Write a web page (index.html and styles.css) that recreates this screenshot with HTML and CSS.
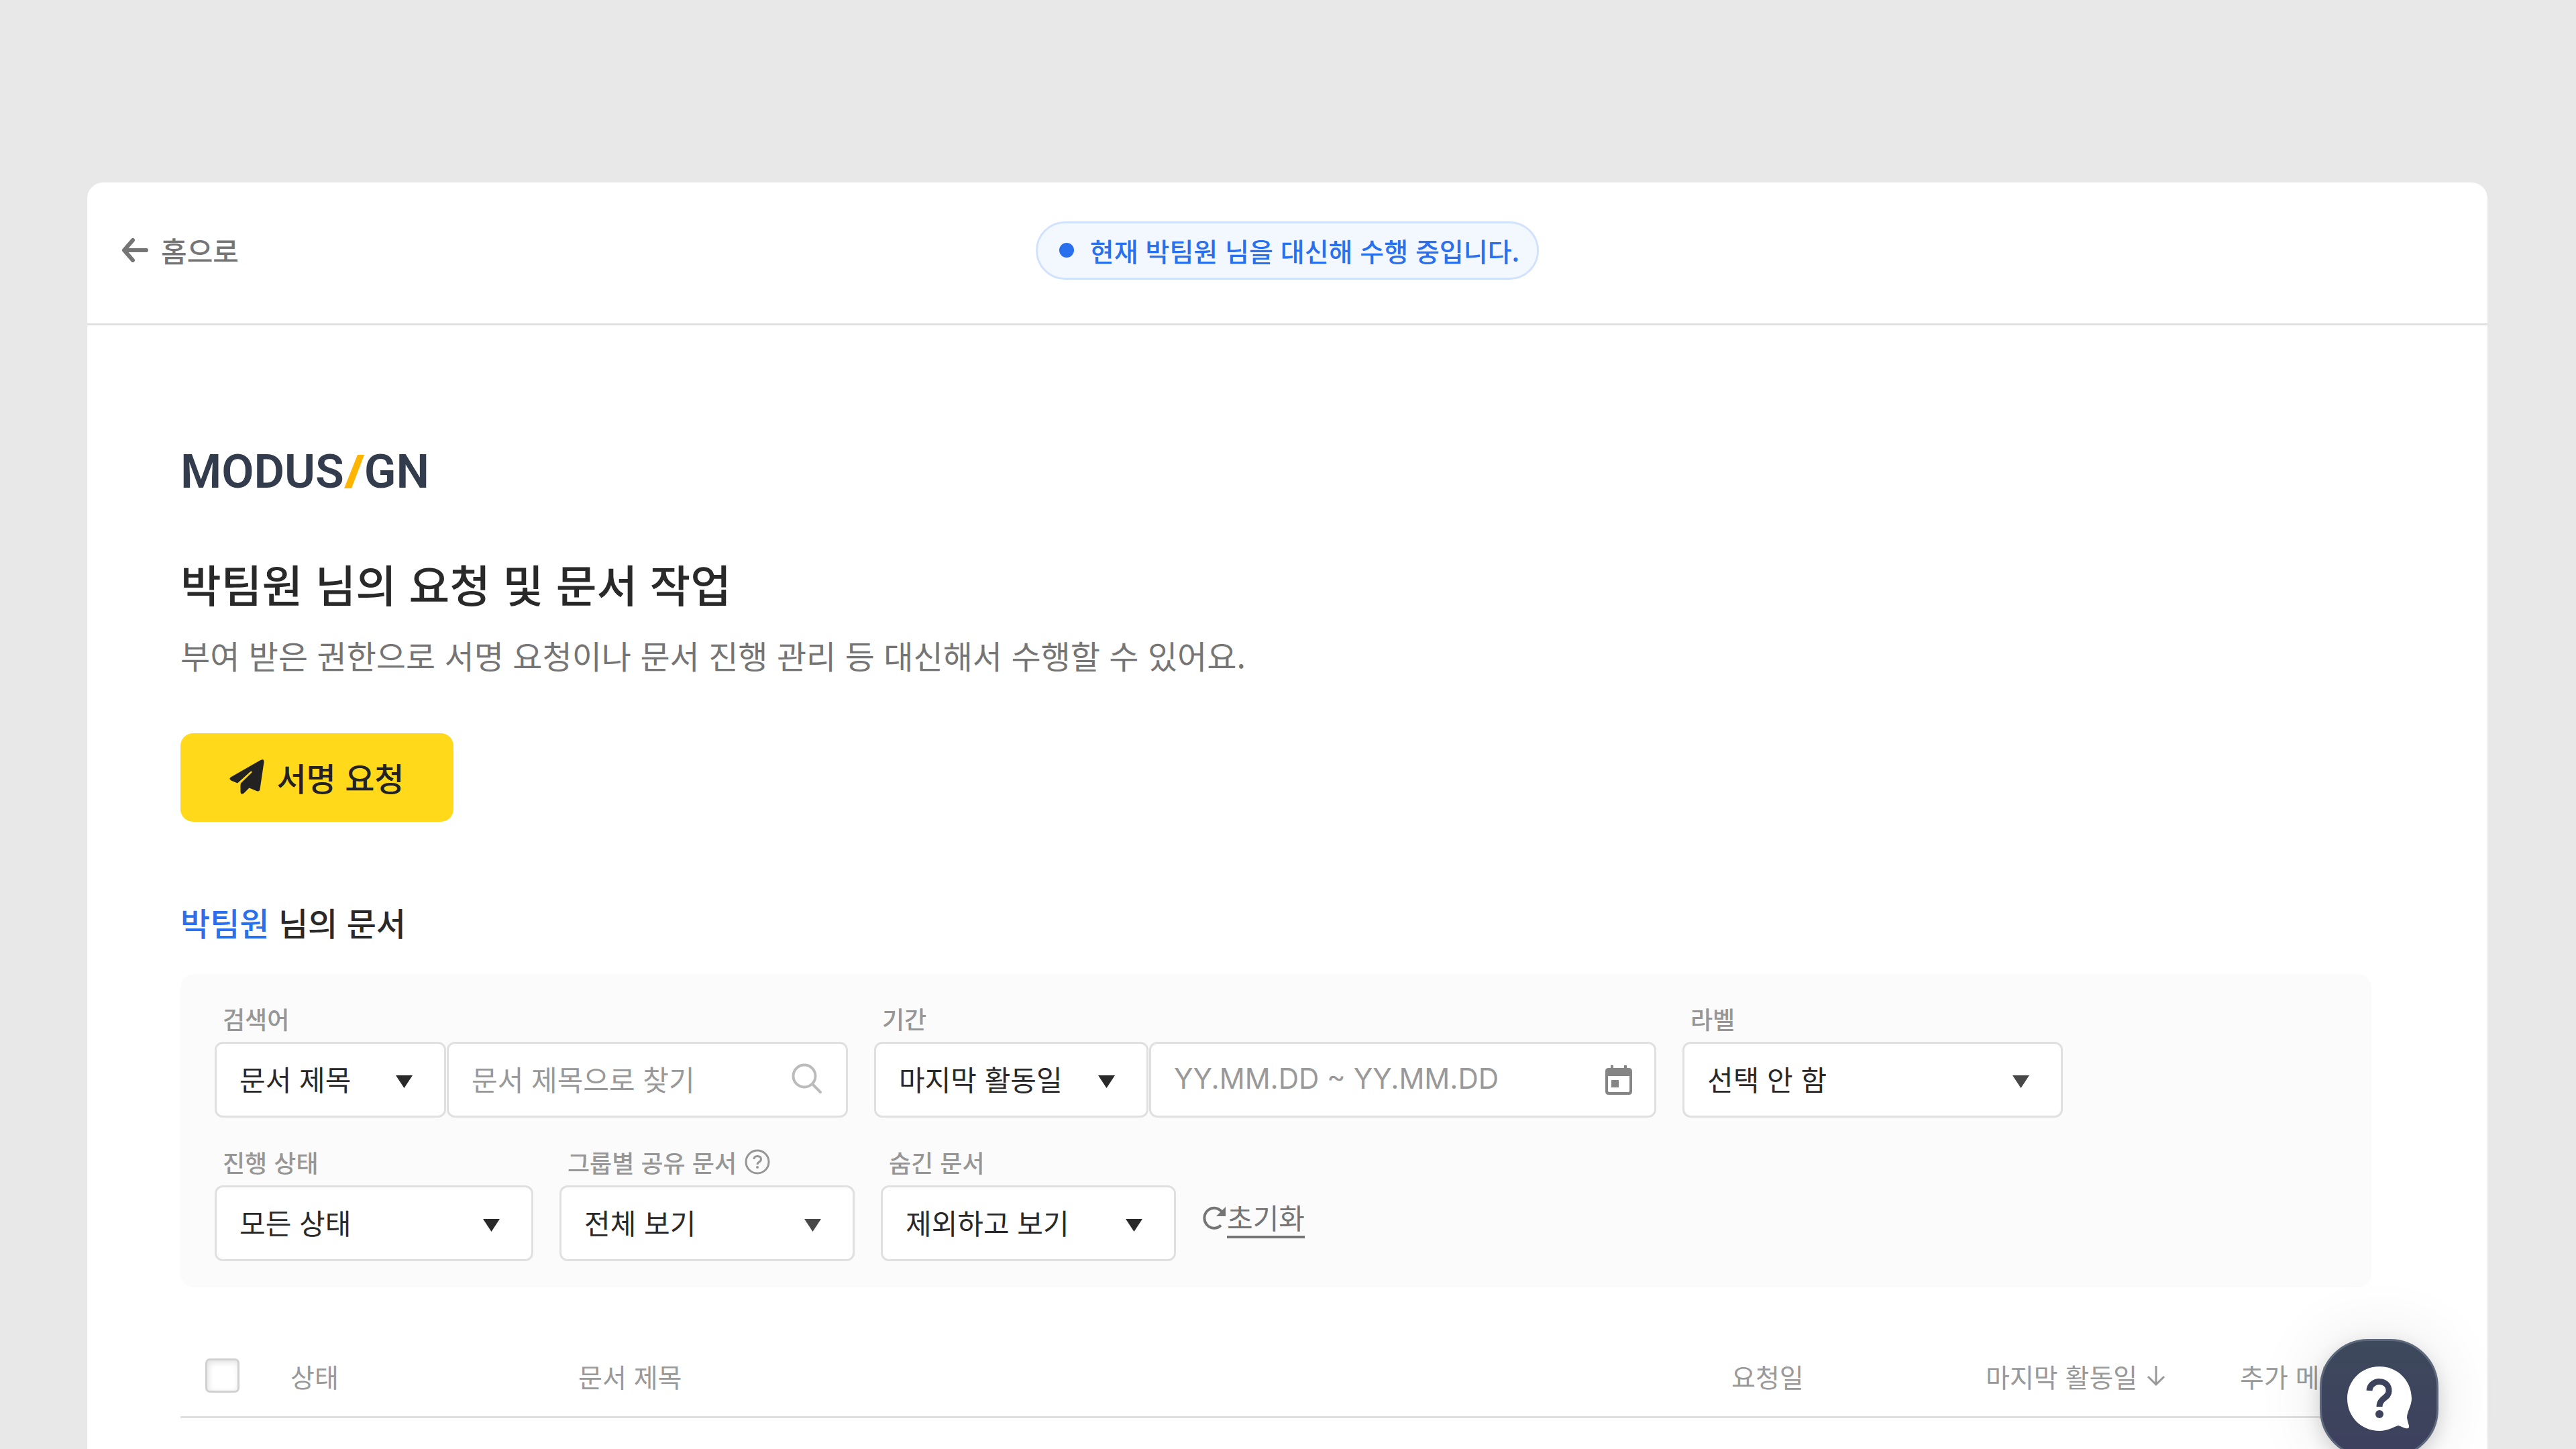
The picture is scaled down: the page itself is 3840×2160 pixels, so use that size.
FILE: index.html
```html
<!DOCTYPE html>
<html lang="ko">
<head>
    <meta charset="UTF-8">
    <meta name="viewport" content="width=device-width, initial-scale=1.0">
    <title>박팀원 님의 요청 및 문서 작업</title>
    <link rel="stylesheet" href="styles.css">
</head>
<body>
    <div class="page">
        <header class="topbar">
            <a class="home-link" href="#">
                <svg class="home-arrow" viewBox="0 0 40 36" aria-hidden="true">
                    <path d="M17 3 L4 18 L17 33 M5 18 H37" fill="none" stroke="currentColor" stroke-width="6" stroke-linecap="round" stroke-linejoin="round"/>
                </svg>
                홈으로
            </a>
            <div class="status-pill"><span class="status-dot"></span>현재 박팀원 님을 대신해 수행 중입니다.</div>
        </header>

        <main class="content">
            <div class="logo">
                <span>MODUS</span>
                <svg class="logo-slash" viewBox="0 0 30 50" aria-hidden="true"><path d="M20 0 H30 L11 50 H0 Z" fill="currentColor"/></svg>
                <span>GN</span>
            </div>
            <h1>박팀원 님의 요청 및 문서 작업</h1>
            <p class="description">부여 받은 권한으로 서명 요청이나 문서 진행 관리 등 대신해서 수행할 수 있어요.</p>
            <button class="request-button" type="button">
                <svg class="plane-icon" viewBox="0 0 52 52" aria-hidden="true">
                    <path d="M46.500 1 Q52 -1.500 51.500 4 L45.500 44.500 Q44.800 48.500 41 47.200 L29.500 42.500 L21.500 50.500 Q17 53.500 16.500 48.500 V38 Q16.500 36.500 17.500 35 L33.500 19.500 Q34 17 31.500 18 L12 35.500 L2.500 31.500 Q-1.500 29 2 26.500 Z" fill="currentColor"/>
                </svg>
                서명 요청
            </button>

            <h2><span class="member">박팀원</span> 님의 문서</h2>

            <form class="filters">
                <div class="filter-row">
                    <div class="filter">
                        <label for="keywordType">검색어</label>
                        <div class="controls">
                            <div class="select-box keyword-type">
                                <select id="keywordType"><option>문서 제목</option></select>
                                <svg class="caret" viewBox="0 0 25 19" aria-hidden="true"><path d="M0 0 H25 L12.500 19 Z" fill="currentColor"/></svg>
                            </div>
                            <div class="input-box keyword">
                                <input type="text" id="keyword" aria-label="검색어" placeholder="문서 제목으로 찾기">
                                <svg class="search-icon" viewBox="0 0 46 46" aria-hidden="true">
                                    <circle cx="19" cy="19" r="16.500" fill="none" stroke="currentColor" stroke-width="4"/>
                                    <path d="M31 31 L43 43" stroke="currentColor" stroke-width="4" stroke-linecap="round"/>
                                </svg>
                            </div>
                        </div>
                    </div>
                    <div class="filter">
                        <label for="periodType">기간</label>
                        <div class="controls">
                            <div class="select-box period-type">
                                <select id="periodType"><option>마지막 활동일</option></select>
                                <svg class="caret" viewBox="0 0 25 19" aria-hidden="true"><path d="M0 0 H25 L12.500 19 Z" fill="currentColor"/></svg>
                            </div>
                            <div class="input-box period">
                                <input type="text" id="period" aria-label="기간" placeholder="YY.MM.DD ~ YY.MM.DD">
                                <svg class="calendar-icon" viewBox="0 0 40 44" aria-hidden="true">
                                    <path d="M5 4 H8 V0 H12 V4 H28 V0 H32 V4 H35 Q40 4 40 9 V39 Q40 44 35 44 H5 Q0 44 0 39 V9 Q0 4 5 4 Z M4 16 V38 Q4 40 6 40 H34 Q36 40 36 38 V16 Z M9 22 H20 V33 H9 Z" fill="currentColor" fill-rule="evenodd"/>
                                </svg>
                            </div>
                        </div>
                    </div>
                    <div class="filter">
                        <label for="docLabel">라벨</label>
                        <div class="select-box doc-label">
                            <select id="docLabel"><option>선택 안 함</option></select>
                            <svg class="caret caret-light" viewBox="0 0 25 19" aria-hidden="true"><path d="M0 0 H25 L12.500 19 Z" fill="currentColor"/></svg>
                        </div>
                    </div>
                </div>

                <div class="filter-row">
                    <div class="filter">
                        <label for="progress">진행 상태</label>
                        <div class="select-box progress">
                            <select id="progress"><option>모든 상태</option></select>
                            <svg class="caret" viewBox="0 0 25 19" aria-hidden="true"><path d="M0 0 H25 L12.500 19 Z" fill="currentColor"/></svg>
                        </div>
                    </div>
                    <div class="filter">
                        <label for="shared">그룹별 공유 문서
                            <svg class="help-icon" viewBox="0 0 38 38" aria-hidden="true">
                                <circle cx="19" cy="19" r="17" fill="none" stroke="currentColor" stroke-width="3"/>
                                <path d="M14 15 Q14 10.500 19 10.500 Q24.500 10.500 24.500 15 Q24.500 17.500 21.500 19.300 Q19 20.800 19 23" fill="none" stroke="currentColor" stroke-width="3"/>
                                <circle cx="19" cy="27" r="2" fill="currentColor"/>
                            </svg>
                        </label>
                        <div class="select-box short">
                            <select id="shared"><option>전체 보기</option></select>
                            <svg class="caret caret-light" viewBox="0 0 25 19" aria-hidden="true"><path d="M0 0 H25 L12.500 19 Z" fill="currentColor"/></svg>
                        </div>
                    </div>
                    <div class="filter">
                        <label for="hiddenDocs">숨긴 문서</label>
                        <div class="select-box short">
                            <select id="hiddenDocs"><option>제외하고 보기</option></select>
                            <svg class="caret" viewBox="0 0 25 19" aria-hidden="true"><path d="M0 0 H25 L12.500 19 Z" fill="currentColor"/></svg>
                        </div>
                    </div>
                    <button class="reset" type="reset">
                        <svg class="reset-icon" viewBox="0 0 36 36" aria-hidden="true">
                            <path d="M28 28.500 A14.500 15 0 1 1 30 9.500" fill="none" stroke="currentColor" stroke-width="4"/>
                            <path d="M35 1 V15 H21 Z" fill="currentColor"/>
                        </svg>
                        <span class="reset-text">초기화</span>
                    </button>
                </div>
            </form>

            <table class="documents">
                <colgroup>
                    <col class="col-check">
                    <col class="col-state">
                    <col>
                    <col class="col-date">
                    <col class="col-date">
                    <col class="col-menu">
                </colgroup>
                <thead>
                    <tr>
                        <th class="check-cell"><input type="checkbox" aria-label="전체 선택"></th>
                        <th>상태</th>
                        <th>문서 제목</th>
                        <th>요청일</th>
                        <th>
                            <span class="sorted">마지막 활동일
                                <svg class="sort-icon" viewBox="0 0 28 32" aria-hidden="true">
                                    <path d="M14 1 V29 M2 17 L14 29 L26 17" fill="none" stroke="currentColor" stroke-width="3"/>
                                </svg>
                            </span>
                        </th>
                        <th>추가 메뉴</th>
                    </tr>
                </thead>
            </table>
        </main>
    </div>

    <button class="help-button" type="button" aria-label="문의하기">
        <svg class="chat-icon" viewBox="0 0 96 96" aria-hidden="true">
            <path d="M48 0 C75 0 96 21 96 48 C96 58 89 68 89 76 C90 84 93 88 92 91 C89 95 81 89 76 88 C69 90 61 96 48 96 C21 96 0 75 0 48 C0 21 21 0 48 0 Z" fill="#fff"/>
            <path d="M33 36 C34 18 63 18 62 37 C62 47 48 47 48 60" fill="none" stroke="#3d435d" stroke-width="9"/>
            <circle cx="48" cy="71" r="6" fill="#3d435d"/>
        </svg>
    </button>
</body>
</html>
```
FILE: styles.css
```css
* {
    box-sizing: border-box;
}
body {
    margin: 0;
    padding: 272px 132px 0 130px;
    background-color: #e8e8e8;
    color: #292929;
    font-family: "Noto Sans CJK KR", sans-serif;
    overflow: hidden;
}
button, input, select {
    font-family: inherit;
    margin: 0;
}
.page {
    min-height: calc(100vh - 272px);
    background: white;
    border-radius: 24px 24px 0 0;
}

/* top bar */
.topbar {
    display: grid;
    grid-template-columns: 1fr auto 1fr;
    align-items: center;
    height: 213px;
    padding: 0 51px 8px;
    border-bottom: 3px solid #e0e0e0;
}
.home-link {
    display: flex;
    align-items: center;
    gap: 19px;
    color: #757575;
    font-size: 42px;
    font-weight: 500;
    line-height: 60px;
    text-decoration: none;
}
.home-arrow {
    width: 40px;
    height: 36px;
}
.status-pill {
    display: flex;
    align-items: center;
    height: 87px;
    padding: 0 26px 0 32px;
    border: 3px solid #d1e2ff;
    border-radius: 44px;
    background: #f3f8ff;
    color: #2970ee;
    font-size: 39px;
    font-weight: 500;
}
.status-dot {
    width: 22px;
    height: 22px;
    margin-right: 24px;
    border-radius: 50%;
    background: #2970ee;
}

/* heading */
.content {
    padding: 180px 173px 0 139px;
}
.logo {
    display: flex;
    align-items: center;
    color: #323c4d;
    font-family: Roboto, sans-serif;
    font-size: 70px;
    font-weight: 600;
    line-height: 76px;
}
.logo-slash {
    width: 30px;
    height: 50px;
    color: #ffb400;
}
h1 {
    margin: 80px 0 0;
    font-size: 66px;
    font-weight: 500;
    line-height: 96px;
}
.description {
    margin: 23px 0 0;
    color: #757575;
    font-size: 48px;
    line-height: 72px;
}
.request-button {
    display: flex;
    align-items: center;
    justify-content: center;
    gap: 18px;
    width: 407px;
    height: 132px;
    margin-top: 81px;
    padding: 0 0 3px;
    border: none;
    border-radius: 19px;
    background: #ffd91a;
    color: #222;
    font-size: 48px;
    font-weight: 500;
    cursor: pointer;
}
.plane-icon {
    width: 52px;
    height: 52px;
}
h2 {
    margin: 113px 0 42px;
    font-size: 48px;
    font-weight: 500;
    line-height: 72px;
}
.member {
    color: #2970ee;
}

/* filters */
.filters {
    display: flex;
    flex-direction: column;
    gap: 39px;
    padding: 39px 51px;
    border-radius: 20px;
    background: #fbfbfb;
}
.filter-row {
    display: flex;
    align-items: flex-end;
    gap: 39px;
}
.filter label {
    display: flex;
    align-items: center;
    gap: 12px;
    margin-bottom: 8px;
    padding-left: 12px;
    color: #969696;
    font-size: 36px;
    font-weight: 500;
    line-height: 54px;
}
.help-icon {
    width: 38px;
    height: 38px;
}
.controls {
    display: flex;
    gap: 1px;
}
.select-box, .input-box {
    position: relative;
    height: 113px;
}
.select-box select, .input-box input {
    appearance: none;
    width: 100%;
    height: 100%;
    padding: 0 34px 4px;
    border: 3px solid #e0e0e0;
    border-radius: 12px;
    background: white;
    color: #292929;
    font-size: 42px;
}
.input-box input::placeholder {
    color: #999;
}
.input-box.period input {
    font-family: Inter, "Noto Sans CJK KR", sans-serif;
}
.keyword-type {
    width: 345px;
}
.keyword {
    width: 598px;
}
.period-type {
    width: 409px;
}
.period {
    width: 756px;
}
.doc-label {
    width: 567px;
}
.progress {
    width: 475px;
}
.short {
    width: 440px;
}
.caret, .search-icon, .calendar-icon {
    position: absolute;
    pointer-events: none;
}
.caret {
    top: 50px;
    right: 50px;
    width: 25px;
    height: 19px;
}
.caret-light {
    color: #484848;
}
.search-icon {
    top: 32px;
    right: 38px;
    width: 46px;
    height: 46px;
    color: #bbb;
}
.calendar-icon {
    top: 35px;
    right: 36px;
    width: 40px;
    height: 44px;
    color: #858585;
}
.reset {
    display: flex;
    align-items: center;
    gap: 1px;
    padding: 0;
    margin-bottom: 34px;
    border: none;
    background: none;
    color: #757575;
    font-size: 42px;
    line-height: 56px;
    cursor: pointer;
}
.reset-text {
    border-bottom: 4px solid #757575;
}
.reset-icon {
    width: 36px;
    height: 36px;
}

/* document table */
.documents {
    width: 100%;
    margin-top: 72px;
    border-collapse: collapse;
    table-layout: fixed;
}
.documents th {
    height: 121px;
    padding: 0;
    border-bottom: 3px solid #e0e0e0;
    color: #999;
    font-size: 39px;
    font-weight: 400;
    text-align: left;
    white-space: nowrap;
}
.documents .check-cell {
    padding-left: 37px;
}
.col-check {
    width: 164px;
}
.col-state {
    width: 429px;
}
.col-date {
    width: 379px;
}
.col-menu {
    width: 196px;
}
.check-cell input {
    display: block;
    appearance: none;
    width: 51px;
    height: 51px;
    border: 3px solid #d0d0d0;
    border-radius: 7px;
    background: white;
    box-shadow: inset 2px 3px 10px rgba(0, 0, 0, 0.12);
}
.sorted {
    display: flex;
    align-items: center;
    gap: 14px;
}
.sort-icon {
    width: 28px;
    height: 32px;
}

/* floating help button, slightly below the fold */
.help-button {
    position: fixed;
    right: 205px;
    bottom: -13px;
    display: flex;
    align-items: center;
    justify-content: center;
    width: 177px;
    height: 177px;
    padding: 0;
    border: 3px solid #5e687d;
    border-radius: 72px;
    background: linear-gradient(#3d495c, #3d405e);
    box-shadow: 0 10px 30px rgba(0, 0, 0, 0.16), 0 0 100px rgba(0, 0, 0, 0.1);
    cursor: pointer;
}
.chat-icon {
    width: 96px;
    height: 96px;
}
```
